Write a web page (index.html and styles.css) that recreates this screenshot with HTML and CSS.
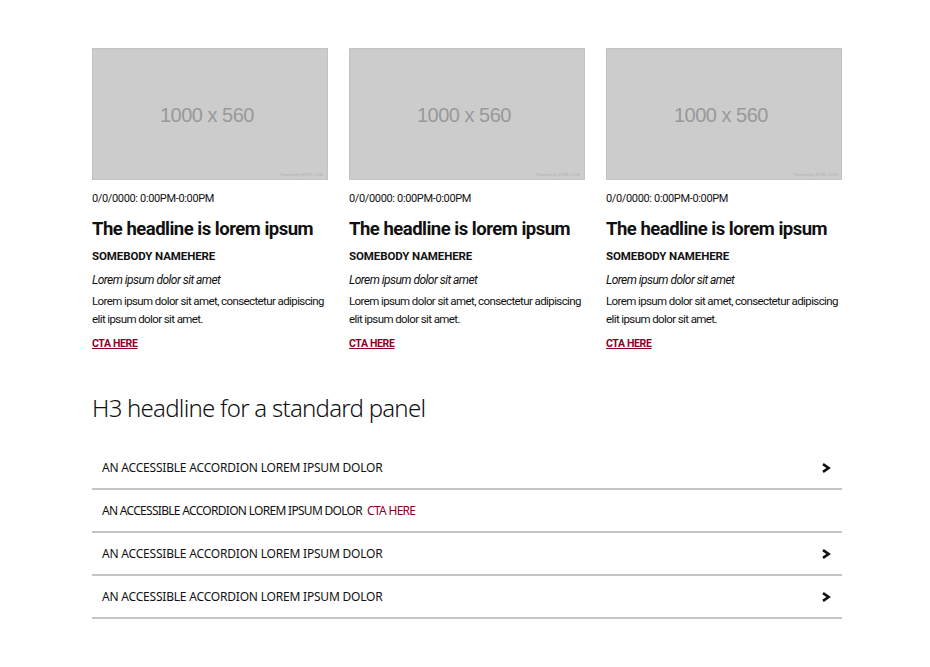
FILE: index.html
```html
<!DOCTYPE html>
<html lang="en">
<head>
  <meta charset="UTF-8">
  <meta name="viewport" content="width=device-width, initial-scale=1.0">
  <title>Events panel</title>
  <link rel="stylesheet" href="styles.css">
</head>
<body>
  <div class="container">
    <div class="cards">
      <div class="card">
        <div class="thumb">
          <span class="thumb-size">1000 x 560</span>
          <span class="thumb-credit">Powered by HTML.COM</span>
        </div>
        <div class="date">0/0/0000: 0:00PM-0:00PM</div>
        <h2>The headline is lorem ipsum</h2>
        <div class="author">SOMEBODY NAMEHERE</div>
        <p class="lede">Lorem ipsum dolor sit amet</p>
        <p class="body">Lorem ipsum dolor sit amet, consectetur adipiscing elit ipsum dolor sit amet.</p>
        <a class="cta" href="#">CTA HERE</a>
      </div>
      <div class="card">
        <div class="thumb">
          <span class="thumb-size">1000 x 560</span>
          <span class="thumb-credit">Powered by HTML.COM</span>
        </div>
        <div class="date">0/0/0000: 0:00PM-0:00PM</div>
        <h2>The headline is lorem ipsum</h2>
        <div class="author">SOMEBODY NAMEHERE</div>
        <p class="lede">Lorem ipsum dolor sit amet</p>
        <p class="body">Lorem ipsum dolor sit amet, consectetur adipiscing elit ipsum dolor sit amet.</p>
        <a class="cta" href="#">CTA HERE</a>
      </div>
      <div class="card">
        <div class="thumb">
          <span class="thumb-size">1000 x 560</span>
          <span class="thumb-credit">Powered by HTML.COM</span>
        </div>
        <div class="date">0/0/0000: 0:00PM-0:00PM</div>
        <h2>The headline is lorem ipsum</h2>
        <div class="author">SOMEBODY NAMEHERE</div>
        <p class="lede">Lorem ipsum dolor sit amet</p>
        <p class="body">Lorem ipsum dolor sit amet, consectetur adipiscing elit ipsum dolor sit amet.</p>
        <a class="cta" href="#">CTA HERE</a>
      </div>
    </div>

    <h3>H3 headline for a standard panel</h3>
    <div class="accordion">
      <button class="acc-row">
        <span>AN ACCESSIBLE ACCORDION LOREM IPSUM DOLOR</span>
        <svg class="chevron" viewBox="0 0 10 10" width="10" height="10"><path d="M2 1.2 L7.6 5 L2 8.8" fill="none" stroke="#111" stroke-width="2.6"/></svg>
      </button>
      <div class="acc-row acc-link">
        <span>AN ACCESSIBLE ACCORDION LOREM IPSUM DOLOR</span>
        <a href="#">CTA HERE</a>
      </div>
      <button class="acc-row">
        <span>AN ACCESSIBLE ACCORDION LOREM IPSUM DOLOR</span>
        <svg class="chevron" viewBox="0 0 10 10" width="10" height="10"><path d="M2 1.2 L7.6 5 L2 8.8" fill="none" stroke="#111" stroke-width="2.6"/></svg>
      </button>
      <button class="acc-row">
        <span>AN ACCESSIBLE ACCORDION LOREM IPSUM DOLOR</span>
        <svg class="chevron" viewBox="0 0 10 10" width="10" height="10"><path d="M2 1.2 L7.6 5 L2 8.8" fill="none" stroke="#111" stroke-width="2.6"/></svg>
      </button>
    </div>
  </div>
</body>
</html>
```

FILE: styles.css
```css
body {
  font-family: Roboto, 'Noto Sans', sans-serif;
  margin: 0;
  padding: 0;
  background-color: #fff;
  color: #111;
}
.container {
  width: 750px;
  margin: 0 0 0 92px;
  padding-top: 48px;
}
.cards {
  display: grid;
  grid-template-columns: repeat(3, 236px);
  justify-content: space-between;
}
.thumb {
  position: relative;
  height: 132px;
  padding: 3px 6px 0 0;
  background-color: #cccccc;
  border: 1px solid #c2c2c2;
  box-sizing: border-box;
  display: flex;
  align-items: center;
  justify-content: center;
}
.thumb-size {
  font-family: 'Liberation Sans', Arial, sans-serif;
  font-size: 20px;
  letter-spacing: -0.5px;
  color: #999;
}
.thumb-credit {
  position: absolute;
  right: 4px;
  bottom: 2px;
  font-family: 'Liberation Sans', Arial, sans-serif;
  font-size: 4px;
  color: #b0b0b0;
}
.date {
  margin-top: 12px;
  font-size: 11px;
  letter-spacing: -0.35px;
  line-height: 14px;
}
h2 {
  margin: 11px 0 0;
  font-size: 18.5px;
  font-weight: 700;
  letter-spacing: -0.5px;
  line-height: 24px;
}
.author {
  margin-top: 7px;
  font-size: 11.5px;
  font-weight: 700;
  letter-spacing: -0.1px;
  line-height: 16px;
}
.lede {
  margin: 8px 0 0;
  font-size: 12px;
  font-style: italic;
  letter-spacing: -0.55px;
  line-height: 16px;
}
.body {
  margin: 4px 0 0;
  font-size: 11.5px;
  letter-spacing: -0.6px;
  line-height: 18px;
}
.cta {
  display: inline-block;
  margin-top: 9px;
  font-size: 10.5px;
  font-weight: 700;
  letter-spacing: -0.35px;
  line-height: 14px;
  color: #8a0025;
  text-decoration: underline;
}
h3 {
  margin: 41px 0 0;
  font-family: 'Noto Sans', sans-serif;
  font-size: 24px;
  font-weight: 300;
  letter-spacing: -0.75px;
  line-height: 32px;
}
.accordion {
  margin-top: 23px;
}
.acc-row {
  display: flex;
  align-items: center;
  justify-content: space-between;
  width: 100%;
  height: 43px;
  padding: 0 10px;
  box-sizing: border-box;
  background: none;
  border: none;
  border-bottom: 2px solid #c4c4c4;
  font-family: 'Noto Sans', sans-serif;
  font-size: 12px;
  letter-spacing: -0.2px;
  color: #111;
  text-align: left;
  cursor: pointer;
}
.acc-link {
  justify-content: flex-start;
  gap: 5px;
  letter-spacing: -0.7px;
}
.acc-link a {
  color: #8a0025;
  text-decoration: none;
}
.chevron {
  margin-right: 1px;
}
```
